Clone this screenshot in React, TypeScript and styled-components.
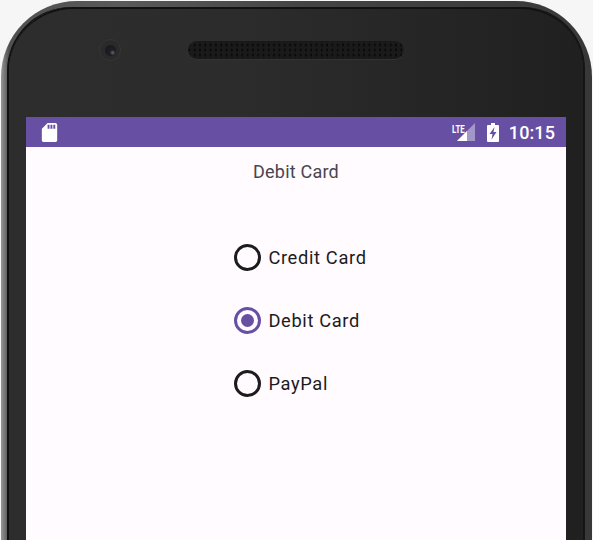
import React from 'react';
import styled, { createGlobalStyle } from 'styled-components';

const options = ['Credit Card', 'Debit Card', 'PayPal'];
const selected = 'Debit Card';

const GlobalStyle = createGlobalStyle`
  html, body {
    margin: 0;
    padding: 0;
    background: #f6f6f6;
  }
`;

const Page = styled.div`
  width: 593px;
  height: 540px;
  overflow: hidden;
  padding: 1px 1px 0;
  box-sizing: border-box;
  font-family: Roboto, "Liberation Sans", sans-serif;
`;

const Phone = styled.div`
  height: 580px;
  padding: 6px 9px 0 8px;
  border-radius: 76px 76px 0 0;
  background: linear-gradient(90deg, #969696 0, #737373 4px, #505050 8px, #5a5a5a 120px, #444 300px, #383838 100%);
`;

const Bezel = styled.div`
  height: 100%;
  padding: 0 17px;
  border-radius: 64px 62px 0 0;
  border-top: 2px solid #111;
  background: linear-gradient(90deg, #2d2d2d 0%, #2c2c2c 40%, #202020 100%);
  box-shadow: -2px 0 0 #101010, 2px 0 0 #151515;
`;

const Head = styled.div`
  height: 108px;
  padding: 0 0 26px 73px;
  box-sizing: border-box;
  display: flex;
  align-items: center;
  gap: 67px;
`;

const Camera = styled.div`
  width: 22px;
  height: 22px;
  border-radius: 50%;
  border: 1px solid #363636;
  box-sizing: border-box;
  display: flex;
  align-items: center;
  justify-content: center;
  background: #2a2a2a;
`;

const Lens = styled.div`
  width: 11px;
  height: 11px;
  border-radius: 50%;
  background: radial-gradient(circle at 70% 70%, #555 0 8%, #1e1e26 25%, #16161a 100%);
`;

const Speaker = styled.div`
  width: 216px;
  height: 18px;
  border-radius: 9px;
  background-color: #1a1a1a;
  background-image: radial-gradient(circle, #050505 0 1px, transparent 1.2px);
  background-size: 5.3px 5px;
  background-position: 4px 1.5px;
  box-shadow: 0 1px 0 #333;
`;

const Screen = styled.div`
  height: 440px;
  background: #fffbfe;
  display: flex;
  flex-direction: column;
  align-items: center;
`;

const StatusBar = styled.div`
  align-self: stretch;
  height: 30px;
  padding: 0 11px 0 12px;
  box-sizing: border-box;
  display: flex;
  align-items: center;
  justify-content: space-between;
  background: #6750a3;
  color: #fff;
`;

const StatusIcons = styled.div`
  display: flex;
  align-items: center;
`;

const SignalWrap = styled.div`
  position: relative;
  width: 24px;
  height: 18px;
  margin-right: 11px;
`;

const LteLabel = styled.span`
  position: absolute;
  left: 0;
  top: 1px;
  font-size: 11px;
  line-height: 11px;
  font-weight: 700;
  transform: scaleX(0.72);
  transform-origin: left top;
`;

const Clock = styled.span`
  margin-left: 10px;
  font-size: 18px;
  font-weight: 500;
  letter-spacing: 0.1px;
`;

const Title = styled.div`
  margin-top: 14px;
  font-size: 18px;
  line-height: 22px;
  letter-spacing: 0.2px;
  color: #49454f;
`;

const Group = styled.div`
  margin-top: 43px;
  display: flex;
  flex-direction: column;
`;

const Row = styled.label`
  height: 63px;
  padding: 0 10px 0 18.5px;
  display: flex;
  align-items: center;
  gap: 7.5px;
`;

const Radio = styled.span<{ $on: boolean }>`
  width: 27px;
  height: 27px;
  box-sizing: border-box;
  border-radius: 50%;
  border: 3px solid ${props => props.$on ? '#6750a4' : '#1c1b1f'};
  display: flex;
  align-items: center;
  justify-content: center;
  &::after {
    content: '';
    display: ${props => props.$on ? 'block' : 'none'};
    width: 13px;
    height: 13px;
    border-radius: 50%;
    background: #6750a4;
  }
`;

const Label = styled.span`
  font-size: 18.3px;
  letter-spacing: 0.65px;
  color: #1c1b1f;
`;

const SdIcon = () => (
  <svg width="23" height="23" viewBox="0 0 24 24" fill="#fff">
    <path d="M18 2h-8L4.02 8 4 20c0 1.1.9 2 2 2h12c1.1 0 2-.9 2-2V4c0-1.1-.9-2-2-2zm-6 6h-2V4h2v4zm3 0h-2V4h2v4zm3 0h-2V4h2v4z" />
  </svg>
);

const SignalIcon = () => (
  <svg width="24" height="18" viewBox="0 0 24 18">
    <path d="M5 18 23 0v18z" fill="#fff" fillOpacity="0.4" />
    <path d="M5 18 15 8v10z" fill="#fff" />
  </svg>
);

const BatteryIcon = () => (
  <svg width="12" height="19" viewBox="0 0 12 19">
    <path
      fill="#fff"
      fillRule="evenodd"
      d="M4 0h4v2h3a1 1 0 0 1 1 1v15a1 1 0 0 1-1 1H1a1 1 0 0 1-1-1V3a1 1 0 0 1 1-1h3zM7.500 4 2.500 11h3L4.500 16.500 9.500 9h-3z"
    />
  </svg>
);

export default function App() {
  return (
    <>
      <GlobalStyle />
      <Page>
        <Phone>
          <Bezel>
            <Head>
              <Camera>
                <Lens />
              </Camera>
              <Speaker />
            </Head>
            <Screen>
              <StatusBar>
                <SdIcon />
                <StatusIcons>
                  <SignalWrap>
                    <SignalIcon />
                    <LteLabel>LTE</LteLabel>
                  </SignalWrap>
                  <BatteryIcon />
                  <Clock>10:15</Clock>
                </StatusIcons>
              </StatusBar>
              <Title>{selected}</Title>
              <Group>
                {options.map(option => (
                  <Row key={option}>
                    <Radio $on={option === selected} />
                    <Label>{option}</Label>
                  </Row>
                ))}
              </Group>
            </Screen>
          </Bezel>
        </Phone>
      </Page>
    </>
  );
}
